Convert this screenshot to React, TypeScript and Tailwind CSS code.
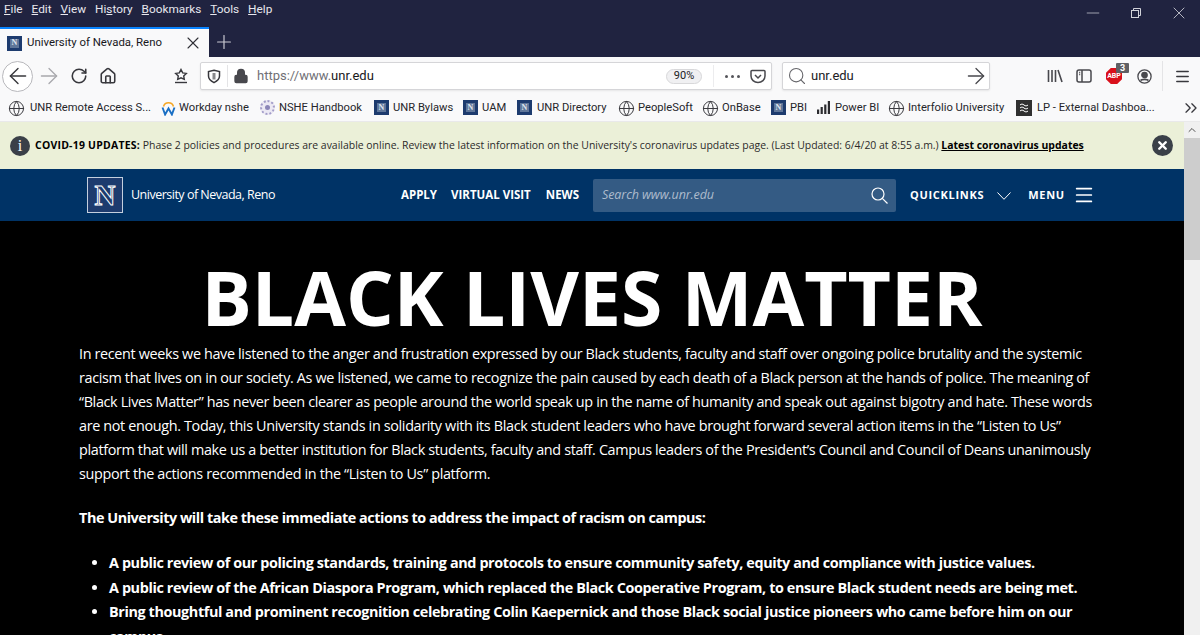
import React from 'react';
import { ArrowLeft, ArrowRight, RotateCw, Home, Plus, X, Lock, Search, Minus, Menu, ChevronUp, ChevronsRight, Globe } from 'lucide-react';

const UnrIcon = () => (
  <span className="flex h-[15px] w-[15px] shrink-0 items-center justify-center bg-[#1d3b6e]">
    <span className="flex h-[9px] w-[9px] items-center justify-center bg-[#5f7699] font-['Liberation_Serif'] text-[8px] font-bold leading-none text-[#dfe5ee]">N</span>
  </span>
);

const GlobeIcon = () => <Globe className="-mx-px h-[17px] w-[17px] shrink-0 text-[#3a3a3f]" strokeWidth={1.4} />;

const WorkdayIcon = () => (
  <svg width="15" height="16" viewBox="0 0 15 16" fill="none" className="shrink-0">
    <path d="M2.5 6.5a5.2 5.2 0 0110 0" stroke="#f5a623" strokeWidth="1.6" />
    <path d="M1.5 7.5l2.6 7 3.4-6 3.4 6 2.6-7" stroke="#1a6fc4" strokeWidth="1.9" />
  </svg>
);

const SealIcon = () => (
  <span className="flex h-[15px] w-[15px] shrink-0 items-center justify-center rounded-full border-2 border-dotted border-[#a29cc8] bg-[#ece9f4]">
    <span className="h-[5px] w-[5px] rounded-full bg-[#8c86b8]" />
  </span>
);

const BarsIcon = () => (
  <svg width="15" height="15" viewBox="0 0 15 15" className="shrink-0" fill="#2b2b2f">
    <rect x="1" y="9.5" width="2.2" height="4.5" />
    <rect x="4.6" y="7" width="2.2" height="7" />
    <rect x="8.2" y="4.5" width="2.2" height="9.5" />
    <rect x="11.8" y="1" width="2.2" height="13" />
  </svg>
);

const LpIcon = () => (
  <svg width="16" height="16" viewBox="0 0 16 16" fill="none" className="shrink-0">
    <rect width="16" height="16" fill="#303030" />
    <path d="M4 5c1.5-1.2 2.500-1.200 4 0s2.500 1.200 4 0M4 8c1.500-1.200 2.500-1.200 4 0s2.500 1.200 4 0M4 11c1.500-1.200 2.500-1.200 4 0s2.500 1.200 4 0" stroke="#fff" strokeWidth="1" />
  </svg>
);

const bookmarks = [
  { icon: <GlobeIcon />, label: 'UNR Remote Access S...', width: 152, gap: 'gap-[6px]' },
  { icon: <WorkdayIcon />, label: 'Workday nshe', width: 99, gap: 'gap-[3px]' },
  { icon: <SealIcon />, label: 'NSHE Handbook', width: 114, gap: 'gap-[4px]' },
  { icon: <UnrIcon />, label: 'UNR Bylaws', width: 89, gap: 'gap-[4px]' },
  { icon: <UnrIcon />, label: 'UAM', width: 54, gap: 'gap-[4px]' },
  { icon: <UnrIcon />, label: 'UNR Directory', width: 102, gap: 'gap-[5px]' },
  { icon: <GlobeIcon />, label: 'PeopleSoft', width: 84, gap: 'gap-[4px]' },
  { icon: <GlobeIcon />, label: 'OnBase', width: 68, gap: 'gap-[4px]' },
  { icon: <UnrIcon />, label: 'PBI', width: 45, gap: 'gap-[4px]' },
  { icon: <BarsIcon />, label: 'Power BI', width: 73, gap: 'gap-[4px]' },
  { icon: <GlobeIcon />, label: 'Interfolio University', width: 127, gap: 'gap-[4px]' },
  { icon: <LpIcon />, label: 'LP - External Dashboa...', width: 159, gap: 'gap-[5px]' },
];

const bullets = [
  'A public review of our policing standards, training and protocols to ensure community safety, equity and compliance with justice values.',
  'A public review of the African Diaspora Program, which replaced the Black Cooperative Program, to ensure Black student needs are being met.',
  'Bring thoughtful and prominent recognition celebrating Colin Kaepernick and those Black social justice pioneers who came before him on our campus.',
];

export default function App() {
  return (
    <div className="flex h-[635px] w-[1200px] flex-col overflow-hidden bg-black font-['Roboto',sans-serif]">
      {/* Window title area */}
      <div className="relative h-[57px] shrink-0 bg-[#202340] text-white">
        <div className="flex h-[20px] items-center gap-[9px] pl-[4px] text-[11.8px] text-[#e8e8ee]">
          <span><u>F</u>ile</span>
          <span><u>E</u>dit</span>
          <span><u>V</u>iew</span>
          <span>Hi<u>s</u>tory</span>
          <span><u>B</u>ookmarks</span>
          <span><u>T</u>ools</span>
          <span><u>H</u>elp</span>
        </div>
        <div className="mt-[7px] flex items-start">
          <div className="flex h-[30px] w-[209px] items-center border-t-2 border-[#0a84ff] bg-[#f9f9fa] pl-[7px] pr-[6px] text-[11.4px] text-[#18181c]">
            <UnrIcon />
            <span className="ml-[5px] flex-1 whitespace-nowrap">University of Nevada, Reno</span>
            <X className="h-[20px] w-[20px] text-[#303036]" strokeWidth={1.3} />
          </div>
          <Plus className="ml-[4px] mt-[4px] h-[22px] w-[22px] text-[#c9cad2]" strokeWidth={1.3} />
        </div>
        <div className="absolute right-0 top-0 flex h-[26px] items-center">
          <Minus className="mr-[28px] h-[20px] w-[20px] text-[#b8b9c4]" strokeWidth={1} />
          <svg width="10" height="10" viewBox="0 0 10 10" fill="none" stroke="#d2d3da" className="mr-[28px]">
            <rect x="0.5" y="2.5" width="7" height="7" />
            <path d="M2.5 2.5V.5h7v7h-2" />
          </svg>
          <X className="mr-[11px] h-[20px] w-[20px] text-[#d2d3da]" strokeWidth={1} />
        </div>
      </div>

      {/* Navigation toolbar */}
      <div className="flex h-[38px] shrink-0 items-center bg-[#f9f9fa] text-[#38383d]">
        <div className="ml-[2px] flex h-[31px] w-[31px] items-center justify-center rounded-full border border-[#b8b8bc] bg-white">
          <ArrowLeft className="h-[26px] w-[26px] shrink-0" strokeWidth={1.3} />
        </div>
        <ArrowRight className="ml-[3px] h-[26px] w-[26px] text-[#a8a8ac]" strokeWidth={1.2} />
        <RotateCw className="ml-[8px] h-[18px] w-[18px]" strokeWidth={2.1} />
        <Home className="ml-[11px] h-[18px] w-[18px]" strokeWidth={2.1} />
        <svg width="16" height="16" viewBox="0 0 16 16" fill="none" stroke="#38383d" strokeWidth="1.4" className="ml-[56px]">
          <path d="M8 1.500l1.700 3.400 3.600.5-2.600 2.500.6 3.500L8 9.800l-3.300 1.600.6-3.500L2.700 5.400l3.600-.5z" />
          <path d="M2 14.500h12" />
        </svg>
        <div className="ml-[11px] flex h-[28px] w-[572px] shrink-0 items-center rounded-[2px] border border-[#d5d5d8] bg-white pr-[5px] shadow-[0_1px_2px_rgba(0,0,0,0.08)]">
          <svg width="14" height="15" viewBox="0 0 14 15" fill="none" stroke="#38383d" strokeWidth="1.500" className="ml-[6px] shrink-0">
            <path d="M7 1.200l5.500 1.400v4.500c0 2.900-2.200 5-5.500 6.500-3.300-1.500-5.500-3.600-5.500-6.500V2.600z" />
            <path d="M7 4v6.500" strokeWidth="3" opacity="0.6" />
          </svg>
          <span className="ml-[6px] h-[22px] w-px bg-[#e4e4e6]" />
          <Lock className="ml-[5px] h-[16px] w-[16px] fill-[#48484d] text-[#48484d]" strokeWidth={2} />
          <span className="ml-[8px] flex-1 whitespace-nowrap text-[13px] text-[#707076]">
            https://www.<span className="text-[#18181c]">unr.edu</span>
          </span>
          <span className="flex h-[15px] w-[36px] items-center justify-center rounded-full border border-[#d8d8da] bg-[#f0f0f2] text-[11px] text-[#202024]">90%</span>
          <span className="ml-[11px] h-[22px] w-px bg-[#ececee]" />
          <span className="ml-[11px] flex w-[15px] justify-between">
            <span className="h-[3px] w-[3px] rounded-full bg-[#55555a]" />
            <span className="h-[3px] w-[3px] rounded-full bg-[#55555a]" />
            <span className="h-[3px] w-[3px] rounded-full bg-[#55555a]" />
          </span>
          <svg width="16" height="15" viewBox="0 0 16 15" fill="none" stroke="#48484d" strokeWidth="1.500" className="ml-[10px]">
            <path d="M2 1.500h12a1 1 0 011 1V7a7 6.500 0 01-14 0V2.500a1 1 0 011-1z" />
            <path d="M5 6l3 3 3-3" />
          </svg>
        </div>
        <div className="ml-[10px] flex h-[28px] w-[208px] shrink-0 items-center rounded-[2px] border border-[#d5d5d8] bg-white pl-[4px] shadow-[0_1px_2px_rgba(0,0,0,0.08)]">
          <Search className="h-[20px] w-[20px] text-[#66666b]" strokeWidth={1.3} />
          <span className="ml-[4px] flex-1 text-[13px] text-[#202024]">unr.edu</span>
          <ArrowRight className="h-[26px] w-[26px] text-[#48484d]" strokeWidth={1.2} />
        </div>
        <svg width="16" height="14" viewBox="0 0 16 14" fill="none" stroke="#48484d" strokeWidth="1.600" className="ml-[57px] shrink-0">
          <path d="M1.500 1v12M5 1v12M8.500 1v12M11 1l4 12" />
        </svg>
        <svg width="16" height="14" viewBox="0 0 16 14" fill="none" stroke="#48484d" strokeWidth="1.500" className="ml-[13px] shrink-0">
          <rect x="1" y="1" width="14" height="12" rx="2" />
          <path d="M6 1v12" />
          <path d="M3.200 3.500h1M3.200 5.500h1" />
        </svg>
        <div className="relative ml-[14px] h-[16px] w-[16px] shrink-0">
          <span className="flex h-[16px] w-[16px] items-center justify-center bg-[#d9101b] text-[7px] font-bold leading-none text-white [clip-path:polygon(30%_0,70%_0,100%_30%,100%_70%,70%_100%,30%_100%,0_70%,0_30%)]">ABP</span>
          <span className="absolute -right-[7px] -top-[5px] flex h-[10px] w-[13px] items-center justify-center rounded-[1px] bg-[#5f5f63] text-[9px] font-bold leading-none text-white">3</span>
        </div>
        <svg width="15" height="15" viewBox="0 0 15 15" fill="none" stroke="#48484d" strokeWidth="1.300" className="ml-[15px] shrink-0">
          <circle cx="7.500" cy="7.500" r="6.600" />
          <circle cx="7.500" cy="6" r="2.700" fill="#48484d" />
          <path d="M3.500 11.500c1-1.600 7-1.600 8 0" strokeWidth="1.800" />
        </svg>
        <span className="ml-[10px] h-[30px] w-px shrink-0 bg-[#e4e4e6]" />
        <Menu className="ml-[11px] h-[17px] w-[17px] shrink-0 text-[#38383d]" strokeWidth={2.2} />
      </div>

      {/* Bookmarks toolbar */}
      <div className="flex h-[26px] shrink-0 items-center bg-[#f9f9fa] pl-[9px] text-[11.2px] text-[#26262b]">
        {bookmarks.map(b => (
          <div key={b.label} className={`flex shrink-0 items-center ${b.gap}`} style={{ width: b.width }}>
            {b.icon}
            <span className="whitespace-nowrap">{b.label}</span>
          </div>
        ))}
        <ChevronsRight className="ml-[6px] h-[20px] w-[20px] shrink-0 text-[#38383d]" strokeWidth={1.6} />
      </div>
      <div className="h-px shrink-0 bg-[#e9e9ea]" />

      {/* Page and scrollbar */}
      <div className="flex min-h-0 flex-1">
        <div className="min-w-0 flex-1 overflow-hidden bg-black">
          {/* Alert */}
          <div className="flex h-[47px] items-center bg-[#ebf0d8] pl-[10px] font-['Open_Sans',sans-serif] text-[10.45px] text-[#2b2b2b]">
            <span className="flex h-[20px] w-[20px] items-center justify-center rounded-full bg-[#3a4048] font-['Liberation_Serif'] text-[16px] leading-none text-white">i</span>
            <span className="ml-[5px] whitespace-nowrap">
              <b className="tracking-[0.24px] text-black">COVID-19 UPDATES:</b> Phase 2 policies and procedures are available online. Review the latest information on the University's coronavirus updates page. (Last Updated: 6/4/20 at 8:55 a.m.) <b className="text-black underline">Latest coronavirus updates</b>
            </span>
            <span className="ml-auto mr-[11px] flex h-[21px] w-[21px] items-center justify-center rounded-full bg-[#3a4048]">
              <X className="h-[13px] w-[13px] text-white" strokeWidth={4.5} />
            </span>
          </div>

          {/* Site nav */}
          <div className="flex h-[52px] items-center bg-[#003366] pl-[87px] font-['Open_Sans',sans-serif] text-white">
            <span className="flex h-[36px] w-[36px] shrink-0 items-center justify-center border border-[#c4cfde] bg-[#1d3b6e] font-['Liberation_Serif'] text-[29px] font-bold leading-none text-transparent [-webkit-text-stroke:1px_white]">N</span>
            <span className="ml-[8px] whitespace-nowrap text-[12.5px] tracking-[-0.5px]">University of Nevada, Reno</span>
            <span className="ml-[126px] text-[11.5px] font-bold">APPLY</span>
            <span className="ml-[14px] text-[11.5px] font-bold">VIRTUAL VISIT</span>
            <span className="ml-[15px] text-[11.5px] font-bold">NEWS</span>
            <div className="ml-[14px] flex h-[33px] w-[303px] shrink-0 items-center rounded-[2px] bg-[#345b84] pl-[9px] pr-[8px]">
              <span className="flex-1 text-[12.5px] italic tracking-[-0.1px] text-[#aebccd]">Search www.unr.edu</span>
              <svg width="17" height="17" viewBox="0 0 17 17" fill="none" stroke="#fff" strokeWidth="1.200" className="shrink-0">
                <circle cx="7" cy="7" r="6" />
                <path d="M11.300 11.300L16.500 16.500" />
              </svg>
            </div>
            <span className="ml-[14px] text-[11px] font-bold tracking-[0.7px]">QUICKLINKS</span>
            <svg width="14" height="8" viewBox="0 0 14 8" fill="none" stroke="#fff" strokeWidth="1" className="ml-[13px] mt-[2px] shrink-0">
              <path d="M.5.5L7 7.300 13.500.5" />
            </svg>
            <span className="ml-[17px] text-[11px] font-bold tracking-[0.7px]">MENU</span>
            <Menu className="ml-[8px] h-[22px] w-[22px] shrink-0" strokeWidth={1.900} />
          </div>

          {/* Main statement */}
          <div className="px-[79px] font-['Open_Sans',sans-serif] text-[14.4px] leading-[24px] tracking-[-0.35px] text-white">
            <h1 className="mt-[31px] whitespace-nowrap text-center text-[75px] font-bold leading-[90px] tracking-normal">BLACK LIVES MATTER</h1>
            <p>
              In recent weeks we have listened to the anger and frustration expressed by our Black students, faculty and staff over ongoing police brutality and the systemic racism that lives on in our society. As we listened, we came to recognize the pain caused by each death of a Black person at the hands of police. The meaning of “Black Lives Matter” has never been clearer as people around the world speak up in the name of humanity and speak out against bigotry and hate. These words are not enough. Today, this University stands in solidarity with its Black student leaders who have brought forward several action items in the “Listen to Us” platform that will make us a better institution for Black students, faculty and staff. Campus leaders of the President’s Council and Council of Deans unanimously support the actions recommended in the “Listen to Us” platform.
            </p>
            <p className="mt-[20px] font-bold tracking-[-0.45px]">The University will take these immediate actions to address the impact of racism on campus:</p>
            <ul className="mt-[21px] list-disc pl-[30px] font-bold leading-[24.5px] tracking-[-0.39px]">
              {bullets.map(b => (
                <li key={b}>{b}</li>
              ))}
            </ul>
          </div>
        </div>

        {/* Scrollbar */}
        <div className="flex w-[16px] shrink-0 flex-col bg-[#f0f0f0]">
          <div className="flex h-[16px] items-center justify-center">
            <ChevronUp className="h-[12px] w-[12px] text-[#505050]" strokeWidth={2} />
          </div>
          <div className="h-[122px] bg-[#cdcdcd]" />
        </div>
      </div>
    </div>
  );
}
